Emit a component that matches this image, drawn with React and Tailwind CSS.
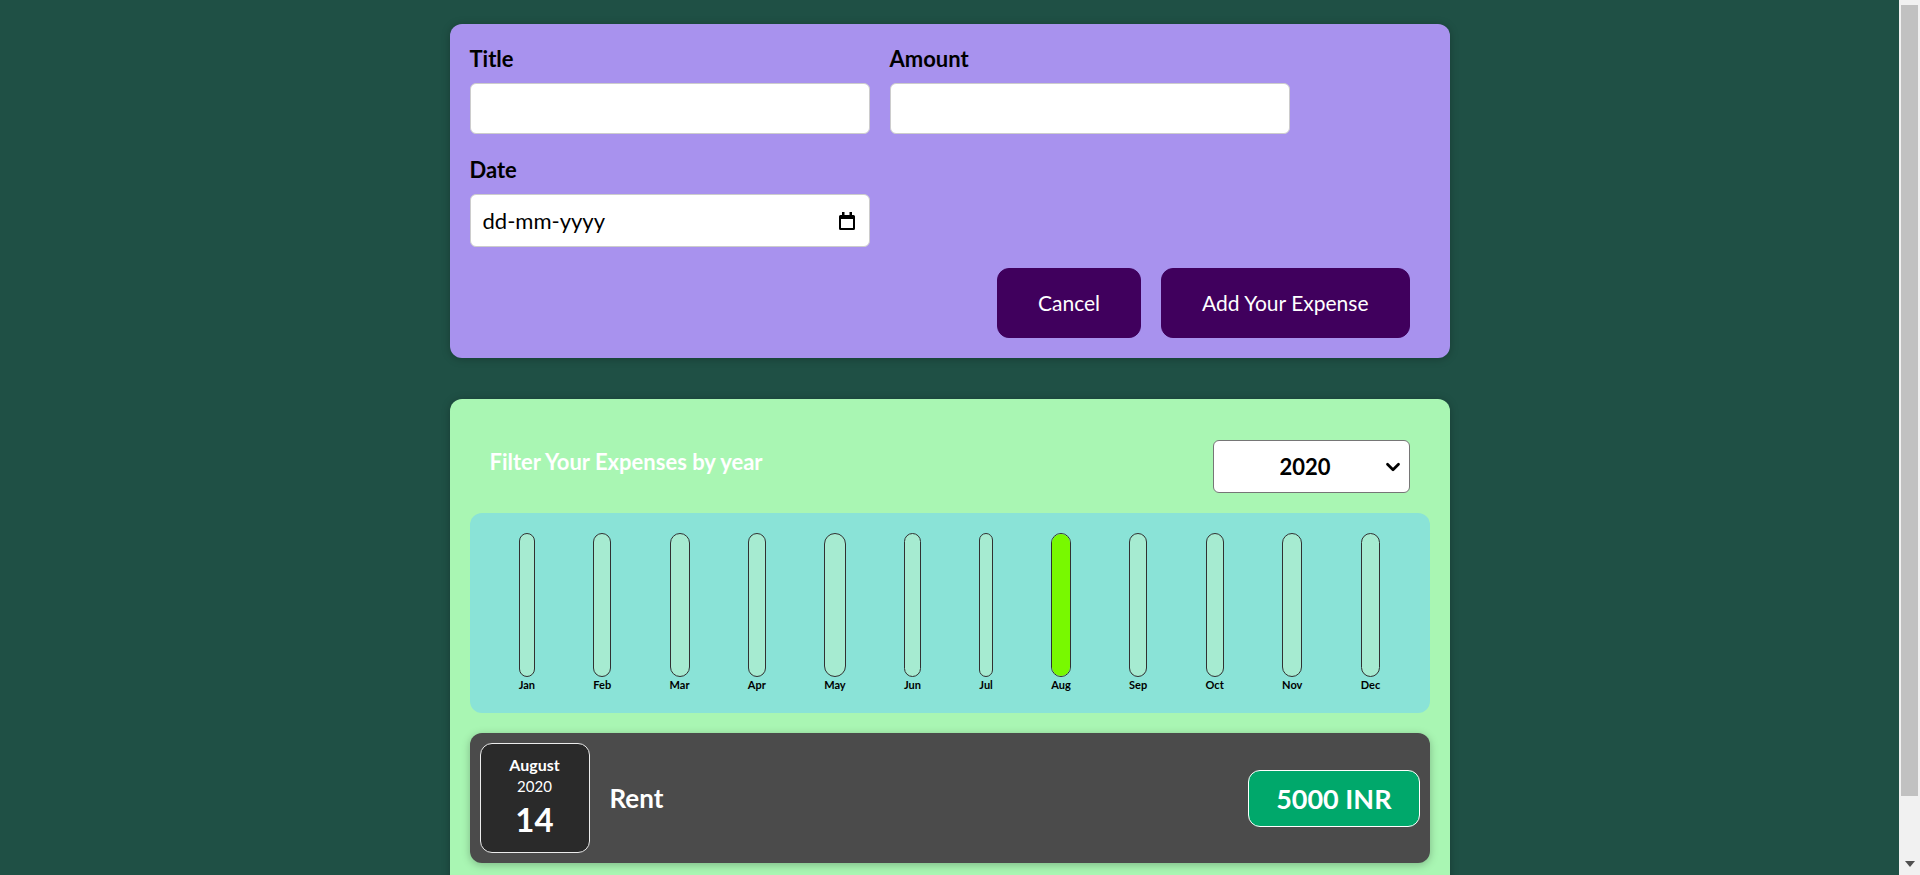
import { useState } from "react";
import { ChevronDown } from "lucide-react";

const months = ["Jan", "Feb", "Mar", "Apr", "May", "Jun", "Jul", "Aug", "Sep", "Oct", "Nov", "Dec"];

// one expense in 2020, so only Aug is filled
const expenses = [{ id: "e1", title: "Rent", amount: 5000, date: new Date(2020, 7, 14) }];

function CalendarIcon() {
  return (
    <svg width="16" height="18" viewBox="0 0 16 18" fill="#000">
      <path d="M3 0h2.5v3h5V0H13v3h1.5A1.5 1.5 0 0 1 16 4.5v12a1.5 1.5 0 0 1-1.5 1.5h-13A1.5 1.5 0 0 1 0 16.5v-12A1.5 1.5 0 0 1 1.5 3H3zM2 7v9h12V7z" />
    </svg>
  );
}

function ChartBar({ label, value, max }) {
  const fill = max > 0 ? Math.round((value / max) * 100) + "%" : "0%";
  return (
    <div className="flex h-full flex-col items-center">
      <div className="flex h-full w-full flex-col justify-end overflow-hidden rounded-[12px] border border-[#313131] bg-[#a6ebd1]">
        <div className="w-full bg-[#78f900]" style={{ height: fill }}></div>
      </div>
      <div className="text-[11px] font-bold leading-[16px] text-black">{label}</div>
    </div>
  );
}

function Scrollbar() {
  return (
    <div className="flex w-[21px] shrink-0 flex-col bg-[#f1f1f1]">
      <div className="mx-[2px] mt-[5px] h-[791px] bg-[#c1c1c1]"></div>
      <div className="flex flex-1 items-end justify-center pb-[8px]">
        <svg width="10" height="6" viewBox="0 0 10 6">
          <path d="M0 0h10L5 6z" fill="#505050" />
        </svg>
      </div>
    </div>
  );
}

export default function App() {
  const [title, setTitle] = useState("");
  const [amount, setAmount] = useState("");
  const [date, setDate] = useState("");
  const [year, setYear] = useState("2020");

  const filtered = expenses.filter((e) => e.date.getFullYear().toString() === year);
  const values = months.map((_, i) =>
    filtered.filter((e) => e.date.getMonth() === i).reduce((s, e) => s + e.amount, 0)
  );
  const max = Math.max(...values);

  return (
    <div
      className="flex h-screen overflow-hidden bg-[#1f5045]"
      style={{ fontFamily: "Lato, 'Noto Sans', sans-serif" }}
    >
      <div className="min-w-0 flex-1 pt-[24px] pb-[40px]">
        <div className="mx-auto w-[1000px] rounded-[12px] bg-[#a892ee] p-5 shadow-[0_1px_8px_rgba(0,0,0,0.25)]">
          <form onSubmit={(e) => e.preventDefault()}>
            <div className="mb-[21px] flex flex-wrap gap-x-5 gap-y-[21px] text-left">
              <div>
                <label className="mb-[10px] block text-[22px] font-bold leading-[29px] text-black">Title</label>
                <input
                  type="text"
                  value={title}
                  onChange={(e) => setTitle(e.target.value)}
                  className="h-[51px] w-[400px] rounded-[6px] border border-[#ccc] bg-white px-[10px] text-[22px] outline-none"
                />
              </div>
              <div>
                <label className="mb-[10px] block text-[22px] font-bold leading-[29px] text-black">Amount</label>
                <input
                  type="text"
                  value={amount}
                  onChange={(e) => setAmount(e.target.value)}
                  className="h-[51px] w-[400px] rounded-[6px] border border-[#ccc] bg-white px-[10px] text-[22px] outline-none"
                />
              </div>
              <div>
                <label className="mb-[10px] block text-[22px] font-bold leading-[29px] text-black">Date</label>
                <div className="flex h-[53px] w-[400px] items-center rounded-[6px] border border-[#ccc] bg-white pl-[12px] pr-[14px]">
                  <input
                    type="text"
                    placeholder="dd-mm-yyyy"
                    value={date}
                    onChange={(e) => setDate(e.target.value)}
                    className="min-w-0 flex-1 bg-transparent text-[22px] text-black outline-none placeholder:text-black"
                  />
                  <CalendarIcon />
                </div>
              </div>
            </div>
            <div className="flex justify-end">
              <button
                type="button"
                className="mr-5 h-[70px] rounded-[12px] border border-[#40005d] bg-[#40005d] px-10 text-[21px] text-white"
              >
                Cancel
              </button>
              <button
                type="submit"
                className="mr-5 h-[70px] rounded-[12px] border border-[#40005d] bg-[#40005d] px-10 text-[21px] text-white"
              >
                Add Your Expense
              </button>
            </div>
          </form>
        </div>

        <div className="mx-auto mt-[41px] w-[1000px] rounded-[12px] bg-[#a9f6b3] p-5 shadow-[0_1px_8px_rgba(0,0,0,0.25)]">
          <div className="px-5 text-white">
            <div className="mt-[21px] mb-5 flex items-center justify-between">
              <label className="mb-[10px] text-[22px] font-bold">Filter Your Expenses by year</label>
              <div className="relative">
                <select
                  value={year}
                  onChange={(e) => setYear(e.target.value)}
                  className="h-[53px] w-[197px] appearance-none rounded-[6px] border border-[#767676] bg-white pl-[66px] text-[22px] font-bold text-black outline-none"
                >
                  <option value="2022">2022</option>
                  <option value="2021">2021</option>
                  <option value="2020">2020</option>
                  <option value="2019">2019</option>
                </select>
                <ChevronDown
                  size={22}
                  strokeWidth={3}
                  className="pointer-events-none absolute right-[6px] top-[16px] text-black"
                />
              </div>
            </div>
          </div>

          <div className="flex h-[200px] justify-around rounded-[12px] bg-[#8ae3d7] p-5 text-center">
            {months.map((m, i) => (
              <ChartBar key={m} label={m} value={values[i]} max={max} />
            ))}
          </div>

          <ul>
            {filtered.map((e) => (
              <li
                key={e.id}
                className="my-5 flex items-center justify-between rounded-[12px] bg-[#4b4b4b] p-[10px] shadow-[0_2px_8px_rgba(0,0,0,0.25)]"
              >
                <div className="flex h-[110px] w-[110px] shrink-0 flex-col items-center justify-center rounded-[12px] border border-[#ececec] bg-[#2a2a2a] text-white">
                  <div className="text-[16px] font-bold leading-[22px]">
                    {e.date.toLocaleString("en-US", { month: "long" })}
                  </div>
                  <div className="text-[15px] leading-[20px]">{e.date.getFullYear()}</div>
                  <div className="text-[33px] font-bold leading-[47px]">{e.date.getDate()}</div>
                </div>
                <div className="flex flex-1 items-center">
                  <h2 className="mx-5 flex-1 text-[26px] font-bold leading-[34px] text-white">{e.title}</h2>
                  <div className="rounded-[12px] border border-white bg-[#00a86b] px-[27px] py-[10px] text-[27px] font-bold leading-[35px] text-white">
                    {e.amount} INR
                  </div>
                </div>
              </li>
            ))}
          </ul>
        </div>
      </div>
      <Scrollbar />
    </div>
  );
}
